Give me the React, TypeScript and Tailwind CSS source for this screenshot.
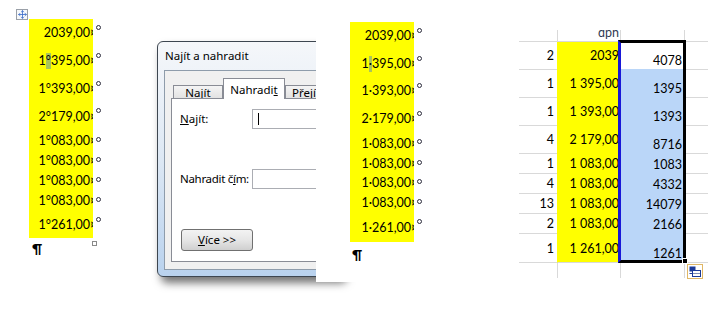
import { Move } from 'lucide-react';

type WordRow = { h: string; text: string };

const leftRows: WordRow[] = [
  { h: 'h-[28px]', text: '2039,00' },
  { h: 'h-[28px]', text: '1#395,00' },
  { h: 'h-[27px]', text: '1#393,00' },
  { h: 'h-[29px]', text: '2#179,00' },
  { h: 'h-[20px]', text: '1#083,00' },
  { h: 'h-[20px]', text: '1#083,00' },
  { h: 'h-[20px]', text: '1#083,00' },
  { h: 'h-[20px]', text: '1#083,00' },
  { h: 'h-[27px]', text: '1#261,00' },
];

const rightRows: WordRow[] = [
  { h: 'h-[28px]', text: '2039,00' },
  { h: 'h-[27px]', text: '1#395,00' },
  { h: 'h-[28px]', text: '1#393,00' },
  { h: 'h-[28px]', text: '2#179,00' },
  { h: 'h-[21px]', text: '1#083,00' },
  { h: 'h-[19px]', text: '1#083,00' },
  { h: 'h-[20px]', text: '1#083,00' },
  { h: 'h-[20px]', text: '1#083,00' },
  { h: 'h-[29px]', text: '1#261,00' },
];

const excelRows = [
  { h: 'h-[28px]', q: '2', p: '2039', r: '4078' },
  { h: 'h-[28px]', q: '1', p: '1 395,00', r: '1395' },
  { h: 'h-[28px]', q: '1', p: '1 393,00', r: '1393' },
  { h: 'h-[28px]', q: '4', p: '2 179,00', r: '8716' },
  { h: 'h-[20px]', q: '1', p: '1 083,00', r: '1083' },
  { h: 'h-[20px]', q: '4', p: '1 083,00', r: '4332' },
  { h: 'h-[20px]', q: '13', p: '1 083,00', r: '14079' },
  { h: 'h-[20px]', q: '2', p: '1 083,00', r: '2166' },
  { h: 'h-[29px]', q: '1', p: '1 261,00', r: '1261' },
];

function WordColumn({ rows, sep }: { rows: WordRow[]; sep: string }) {
  return (
    <div className="flex flex-col font-['Lato',sans-serif] text-[12.5px] text-black">
      {rows.map((row, i) => {
        const [head, tail] = row.text.split('#');
        return (
          <div key={i} className={`flex ${row.h}`}>
            <div className="w-[64px] bg-[#ffff00] overflow-hidden flex items-center justify-end">
              <span className="whitespace-nowrap leading-[16px] flex">
                <span>{head}</span>
                {tail !== undefined && (
                  <>
                    <span className={i === 1 ? 'bg-[#a9c45c] h-[16px]' : ''}>{sep}</span>
                    <span>{tail}</span>
                  </>
                )}
                <span className="w-[3px] overflow-hidden">¤</span>
              </span>
            </div>
            <div className="ml-[3px] mt-[6px] w-[5px] h-[5px] rounded-full border border-[#2b2b3b]" />
          </div>
        );
      })}
    </div>
  );
}

function PasteIcon() {
  return (
    <svg width="16" height="15" viewBox="0 0 16 15">
      <rect x="0.5" y="0.5" width="15" height="14" fill="#fff" stroke="#e0b765" />
      <rect x="2.5" y="2.5" width="6" height="5" fill="#1c3a98" />
      <rect x="5.5" y="6.5" width="8" height="6" fill="#fff" stroke="#1c3a98" />
      <line x1="2.5" y1="9.5" x2="5" y2="9.5" stroke="#1c3a98" />
      <line x1="6" y1="9.5" x2="13" y2="9.5" stroke="#7d8db8" />
    </svg>
  );
}

export default function App() {
  return (
    <div className="relative w-[708px] h-[311px] bg-white overflow-hidden">
      {/* first word table */}
      <div className="absolute left-[29px] top-[19px]">
        <div className="absolute left-[-13px] top-[-10px] w-[12px] h-[11px] border border-[#9aa0a8] bg-[#f6f8fb] flex items-center justify-center">
          <Move size={9} strokeWidth={2.2} color="#3a6cc8" />
        </div>
        <WordColumn rows={leftRows} sep="°" />
        <div className="flex items-start">
          <span className="w-[63px] pl-[3px] mt-[3px] font-['Lato',sans-serif] font-bold text-[14px] leading-[16px] text-black">¶</span>
          <div className="mt-[3px] w-[5px] h-[5px] border border-[#8a8a8a]" />
        </div>
      </div>

      {/* find & replace dialog */}
      <div className="absolute left-[157px] top-[41px] w-[186px] h-[236px] rounded-[6px] border border-[#3d4650] bg-gradient-to-b from-[#f5f7fa] via-[#dde8f4] to-[#b9d2ee] shadow-[4px_6px_9px_rgba(0,0,0,0.55)] flex flex-col px-[6px] pb-[6px] font-['Segoe_UI','Noto_Sans',sans-serif] text-[11.5px] text-black">
        <div className="h-[28px] flex items-center pl-[1px]">Najít a nahradit</div>
        <div className="flex-1 border border-[#8e9cab] bg-[#f0f0f0] flex flex-col pb-[7px]">
          <div className="h-[27px] flex items-end pl-[8px] leading-[13px]">
            <div className="w-[50px] h-[13px] border border-b-0 border-[#898c95] bg-gradient-to-b from-[#f4f4f4] to-[#e2e2e2] flex justify-center">
              <span>Na<span className="underline">j</span>ít</span>
            </div>
            <div className="relative z-10 w-[62px] h-[21px] -mb-[1px] border border-b-0 border-[#898c95] bg-white flex justify-center pt-[4px]">
              <span>Nahradi<span className="underline">t</span></span>
            </div>
            <div className="w-[50px] h-[13px] border border-b-0 border-[#898c95] bg-gradient-to-b from-[#f4f4f4] to-[#e2e2e2] pl-[6px]">
              <span>Př<span className="underline">e</span>jít</span>
            </div>
          </div>
          <div className="flex-1 ml-[6px] border border-[#898c95] bg-white flex flex-col pl-[8px] pt-[10px]">
            <div className="flex items-center h-[20px]">
              <span className="w-[72px] shrink-0"><span className="underline">N</span>ajít:</span>
              <div className="flex-1 h-[20px] border border-[#abadb3] bg-white pl-[5px] pt-[3px]">
                <div className="w-[1px] h-[12px] bg-black" />
              </div>
            </div>
            <div className="flex items-center h-[20px] mt-[40px]">
              <span className="w-[72px] shrink-0 whitespace-nowrap tracking-[-0.3px]">Nahradit č<span className="underline">í</span>m:</span>
              <div className="flex-1 h-[20px] border border-[#abadb3] bg-white" />
            </div>
            <div className="mt-[40px] ml-[1px] w-[72px] h-[22px] rounded-[3px] border border-[#707070] bg-gradient-to-b from-[#f3f3f3] via-[#e6e6e6] to-[#cfcfcf] flex items-center justify-center">
              <span><span className="underline">V</span>íce &gt;&gt;</span>
            </div>
          </div>
        </div>
      </div>

      {/* second word table, over the dialog */}
      <div className="absolute left-[316px] top-0 w-[200px] h-[282px] bg-white">
        <div className="ml-[34px] mt-[22px]">
          <WordColumn rows={rightRows} sep="·" />
          <div className="pl-[2px] mt-[5px] font-['Lato',sans-serif] font-bold text-[14px] leading-[16px] text-black">¶</div>
        </div>
      </div>

      {/* excel sheet */}
      <div className="absolute left-[519px] top-[30px] font-['Lato',sans-serif] text-[12.5px] leading-[15px] text-black">
        <div className="flex h-[12px]">
          <div className="w-[38px] border-b border-[#d9d9d9]" />
          <div className="w-[63px] border-l border-b border-[#d9d9d9] overflow-hidden flex items-end justify-end pr-[1px]">
            <span className="mb-[1px] text-[#2f3a52]">dph</span>
          </div>
          <div className="w-[64px] border-l border-b border-[#d9d9d9]" />
          <div className="w-[24px] border-l border-b border-[#d9d9d9]" />
        </div>
        {excelRows.map((row, i) => (
          <div key={i} className={`flex ${row.h}`}>
            <div className="w-[38px] border-b border-[#d9d9d9] flex items-center justify-end pr-[3px]">{row.q}</div>
            <div
              className={`w-[63px] border-l border-b bg-[#ffff00] border-l-[#ffff00] ${
                i === excelRows.length - 1 ? 'border-b-[#d9d9d9]' : 'border-b-[#ffff00]'
              } flex items-center justify-end pr-[1px]`}
            >
              {row.p}
            </div>
            <div
              className={`w-[64px] border-l border-b border-[#d9d9d9] ${
                i === 0 ? 'bg-white border-b-[#bad6f8]' : 'bg-[#bad6f8] border-b-[#bad6f8]'
              } flex items-end justify-end pr-[2px] pb-[1px]`}
            >
              {row.r}
            </div>
            <div className="w-[24px] border-l border-b border-[#d9d9d9]" />
          </div>
        ))}
        <div className="flex h-[15px]">
          <div className="w-[38px]" />
          <div className="w-[63px] border-l border-[#d9d9d9]" />
          <div className="w-[64px] border-l border-[#d9d9d9]" />
          <div className="w-[24px] border-l border-[#d9d9d9]" />
        </div>

        {/* selection frame */}
        <div className="absolute left-[99px] top-[10px] w-[68px] h-[223px] border-[3px] border-black border-l-[#1818d8]" />
        <div className="absolute left-[163px] top-[228px] w-[6px] h-[6px] bg-black border border-white" />
        <div className="absolute left-[168px] top-[234px]">
          <PasteIcon />
        </div>
      </div>
    </div>
  );
}
